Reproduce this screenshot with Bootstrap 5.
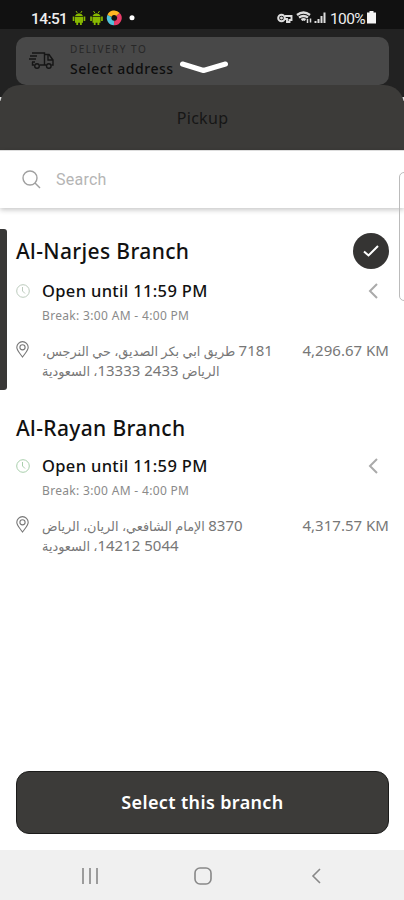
<!DOCTYPE html>
<html lang="en">
<head>
<meta charset="utf-8">
<meta name="viewport" content="width=device-width, initial-scale=1">
<title>Pickup</title>
<link href="https://cdn.jsdelivr.net/npm/bootstrap@5.3.0/dist/css/bootstrap.min.css" rel="stylesheet">
<style>
body{font-family:"Noto Sans","DejaVu Sans",sans-serif;background:#fff;color:#111}
.screen{width:404px;height:900px}
svg{display:block;flex:none}
.status{height:29px;background:#111;color:#eee;font:500 15.5px/20px Roboto,sans-serif;padding:9px 28px 0 31px}
.status .time{width:36px;letter-spacing:-.6px}
.status .pct{font-size:15.5px;width:37px;letter-spacing:-.6px;font-weight:400}
.top-area{height:56px;background:#222;padding:8px 15px 0 16px}
.address{height:48px;background:#484848;border-radius:10px;padding:0 0 0 13px}
.address .eyebrow{font-size:10px;line-height:14px;letter-spacing:1.5px;color:#272727;margin-top:-1px}
.address .value{font-size:14px;line-height:21px;padding-top:2px;font-weight:500;color:#0e0e0e;letter-spacing:.54px}
.addr-text{margin-left:15px}
.handle{left:178px;top:59px}
.sheet-back{background:linear-gradient(#222 12px,#ddd 12px,#ddd 16px,#3c3b39 16px)}
.sheet-head{height:65px;background:#3c3b39;border-radius:20px 20px 0 0;font-size:16px;letter-spacing:.3px;color:#161616;padding-left:1px}
.search{height:58px;padding:0 22px;box-shadow:0 2px 5px rgba(0,0,0,.22);border-top:1px solid #ddd}
.search input{font:400 16px/24px Roboto,sans-serif;letter-spacing:.25px;margin-left:15px}
.search input::placeholder{color:#b5b5b5;opacity:1}
.branches{padding:23px 15px 0 16px}
.branch-name{font-size:21px;line-height:40px;height:40px;font-weight:500;letter-spacing:.36px}
.tick{width:36px;height:36px;background:#353433}
.tick-row{margin-top:-1px;height:41px}
.icon-col{width:26px}
.hours{font-size:16.5px;line-height:24px;font-weight:500;letter-spacing:.34px;margin-top:8px}
.second .hours{margin-top:5px}
.pause{font-size:12px;line-height:16px;color:#8a8a8a;letter-spacing:.33px;padding-top:1px}
.place{margin-top:16px}
.place svg{margin-top:1px}
.km{font-size:15px;line-height:20px;color:#777;letter-spacing:.02px}
.addr{font-size:12.85px;line-height:20px;color:#777}
.addr div{width:max-content;height:20px}
.num{font-size:15px;letter-spacing:.45px}
.second{margin-top:28px}
.second .branch-name{height:41px}
.chev{margin-right:11px}
.left-tab{left:0;top:229px;width:7px;height:161px;background:#393837;border-radius:0 3px 3px 0}
.right-tab{left:399px;top:172px;width:12px;height:129px;border:1.5px solid #bbb;border-radius:5px}
.select{height:63px;background:#3c3b39;border:1px solid #1b1b1a;border-radius:13px;color:#fff;font-weight:600;font-size:18px;letter-spacing:.36px;margin:0 15px 16px 16px}
.select:hover{background:#3c3b39;color:#fff}
.sysnav{height:50px;background:#f0f0f0;padding:2px 83px 0 81px}
.home-key{margin-right:4px}
</style>
</head>
<body>
<main class="screen position-relative overflow-hidden d-flex flex-column">
  <div class="status d-flex align-items-start flex-shrink-0">
    <span class="time">14:51</span>
    <svg class="ms-1" width="66" height="20" viewBox="0 1 66 20">
      <g id="droid" fill="#87b800"><path d="M4 8a4.3 4.3 0 0 1 8 0z"/><path d="M4 8.700h8v6H4zM1.700 8.500h1.700v4.500H1.700zM12.600 8.500h1.700v4.500h-1.700zM5.300 14h1.800v3H5.300zM9 14h1.800v3H9z"/><path d="M5 3l1.300 2M11 3L9.700 5" stroke="#87b800"/></g>
      <use href="#droid" x="17.500"/>
      <g fill="none" stroke-width="4.500"><path d="M38.500 8A5 5 0 0 1 47 6.500" stroke="#ffb423"/><path d="M47 6.500A5 5 0 0 1 43 15" stroke="#e93c69"/><path d="M43 15A5 5 0 0 1 38.500 8" stroke="#52c3dc"/></g>
      <circle cx="61" cy="9.700" r="2.500" fill="#fff"/>
    </svg>
    <svg class="ms-auto" width="53" height="20" viewBox="0 1 53 20" fill="none" stroke="#ddd">
      <circle cx="4.500" cy="10" r="3.300" stroke-width="2"/><circle cx="4.500" cy="10" r="1" fill="#ddd"/><path d="M8 8h6.500v4h-2v2H10v-3H8" stroke-width="1.900"/>
      <path d="M20 7q6.500-5 13 0M22 9.500q4.500-3 9 0M24.500 12q2-1.500 4 0" stroke-width="2.300"/><path d="M30.500 15v-4M33.500 10.500v4" stroke-width="1.500"/>
      <path d="M38.500 15v-2M41.500 15v-4M44.500 15V8M47.500 15V4.500" stroke-width="2"/>
    </svg>
    <span class="pct">100%</span>
    <svg width="9" height="20" viewBox="0 1 9 20"><path d="M2.500 3h4v1.500H9V15.500H0V4.500h2.500z" fill="#f5f5f5"/></svg>
  </div>

  <div class="top-area flex-shrink-0">
    <div class="address d-flex align-items-center">
      <svg width="26" height="20" viewBox="0 0 26 20" fill="none" stroke="#151515" stroke-width="1.400"><path d="M3 2h12.500v12H11M5 14H3.500V11M1 5h7M0 8h7M3 11h3M15.500 3.500h4.500l4 5.500v5h-1.500M17 14h-1.500M19 4v5h5"/><circle cx="8" cy="15" r="2.300"/><circle cx="19.800" cy="15" r="2.300"/></svg>
      <div class="addr-text">
        <div class="eyebrow">DELIVERY TO</div>
        <div class="value">Select address</div>
      </div>
    </div>
  </div>

  <div class="sheet-back flex-shrink-0">
    <div class="sheet-head d-flex align-items-center justify-content-center">Pickup</div>
  </div>

  <div class="search d-flex align-items-center flex-shrink-0">
    <svg width="19" height="19" viewBox="0 0 19 19" fill="none" stroke="#a0a0a0" stroke-width="1.400"><circle cx="8" cy="8" r="7"/><path d="M13 13l5 5"/></svg>
    <input class="border-0 bg-transparent p-0" type="text" placeholder="Search" aria-label="Search">
  </div>

  <div class="branches flex-grow-1">
    <section>
      <div class="tick-row d-flex justify-content-between align-items-end">
        <h2 class="branch-name mb-0">Al-Narjes Branch</h2>
        <span class="tick rounded-circle d-flex align-items-center justify-content-center mb-auto mt-auto"><svg width="18" height="14" viewBox="0 0 18 14" fill="none" stroke="#fff" stroke-width="2"><path d="M2 7.500l4.500 4L16 2"/></svg></span>
      </div>
      <div class="d-flex align-items-center hours">
        <div class="icon-col"><svg width="14" height="14" viewBox="0 0 14 14" fill="none" stroke="#bccbbd"><circle cx="7" cy="7" r="6.300"/><path d="M6.500 3v4l2.500 2.500"/></svg></div>
        <span>Open until 11:59 PM</span>
        <svg class="chev ms-auto" width="10" height="16" viewBox="0 0 10 16" fill="none" stroke="#aaa" stroke-width="2"><path d="M9 1L2 8l7 7"/></svg>
      </div>
      <div class="d-flex pt-1"><div class="icon-col"></div><span class="pause">Break: 3:00 AM - 4:00 PM</span></div>
      <div class="d-flex place">
        <div class="icon-col"><svg width="13" height="17" viewBox="0 0 13 17" fill="none" stroke="#777" stroke-width="1.100"><path d="M6.500 16C4 12.500.8 9.500.8 6.300a5.700 5.700 0 0 1 11.400 0C12.200 9.500 9 12.500 6.500 16z"/><circle cx="6.500" cy="6.300" r="2.600"/></svg></div>
        <div class="addr" lang="ar"><div dir="rtl"><span class="num">7181</span> طريق ابي بكر الصديق، حي النرجس،</div><div dir="rtl">الرياض <span class="num">2433 13333</span>، السعودية</div></div>
        <span class="km ms-auto">4,296.67 KM</span>
      </div>
    </section>
    <section class="second">
      <h2 class="branch-name mb-0">Al-Rayan Branch</h2>
      <div class="d-flex align-items-center hours">
        <div class="icon-col"><svg width="14" height="14" viewBox="0 0 14 14" fill="none" stroke="#a9cfac"><circle cx="7" cy="7" r="6.300"/><path d="M6.500 3v4l2.500 2.500"/></svg></div>
        <span>Open until 11:59 PM</span>
        <svg class="chev ms-auto" width="10" height="16" viewBox="0 0 10 16" fill="none" stroke="#aaa" stroke-width="2"><path d="M9 1L2 8l7 7"/></svg>
      </div>
      <div class="d-flex pt-1"><div class="icon-col"></div><span class="pause">Break: 3:00 AM - 4:00 PM</span></div>
      <div class="d-flex place">
        <div class="icon-col"><svg width="13" height="17" viewBox="0 0 13 17" fill="none" stroke="#777" stroke-width="1.100"><path d="M6.500 16C4 12.500.8 9.500.8 6.300a5.700 5.700 0 0 1 11.400 0C12.200 9.500 9 12.500 6.500 16z"/><circle cx="6.500" cy="6.300" r="2.600"/></svg></div>
        <div class="addr" lang="ar"><div dir="rtl"><span class="num">8370</span> الإمام الشافعي، الريان، الرياض</div><div dir="rtl"><span class="num">5044 14212</span>، السعودية</div></div>
        <span class="km ms-auto">4,317.57 KM</span>
      </div>
    </section>
  </div>

  <button class="select btn flex-shrink-0" type="button">Select this branch</button>

  <nav class="sysnav d-flex align-items-center justify-content-between flex-shrink-0" aria-label="System">
    <svg width="18" height="16" viewBox="0 0 18 16" stroke="#888" stroke-width="1.600"><path d="M2 0v16M9 0v16M16 0v16"/></svg>
    <svg class="home-key" width="18" height="18" viewBox="0 0 18 18" fill="none" stroke="#888" stroke-width="1.600"><rect x="1" y="1" width="16" height="16" rx="5"/></svg>
    <svg width="10" height="16" viewBox="0 0 10 16" fill="none" stroke="#888" stroke-width="1.600"><path d="M9 1L2 8l7 7"/></svg>
  </nav>

  <svg class="handle position-absolute" width="52" height="16" viewBox="0 0 52 16" fill="none" stroke="#fff" stroke-width="5" stroke-linecap="round" stroke-linejoin="round"><path d="M4.500 5L25.500 11.500 47.500 5"/></svg>
  <div class="left-tab position-absolute"></div>
  <div class="right-tab position-absolute"></div>
</main>
<script src="https://cdn.jsdelivr.net/npm/bootstrap@5.3.0/dist/js/bootstrap.bundle.min.js"></script>
</body>
</html>
